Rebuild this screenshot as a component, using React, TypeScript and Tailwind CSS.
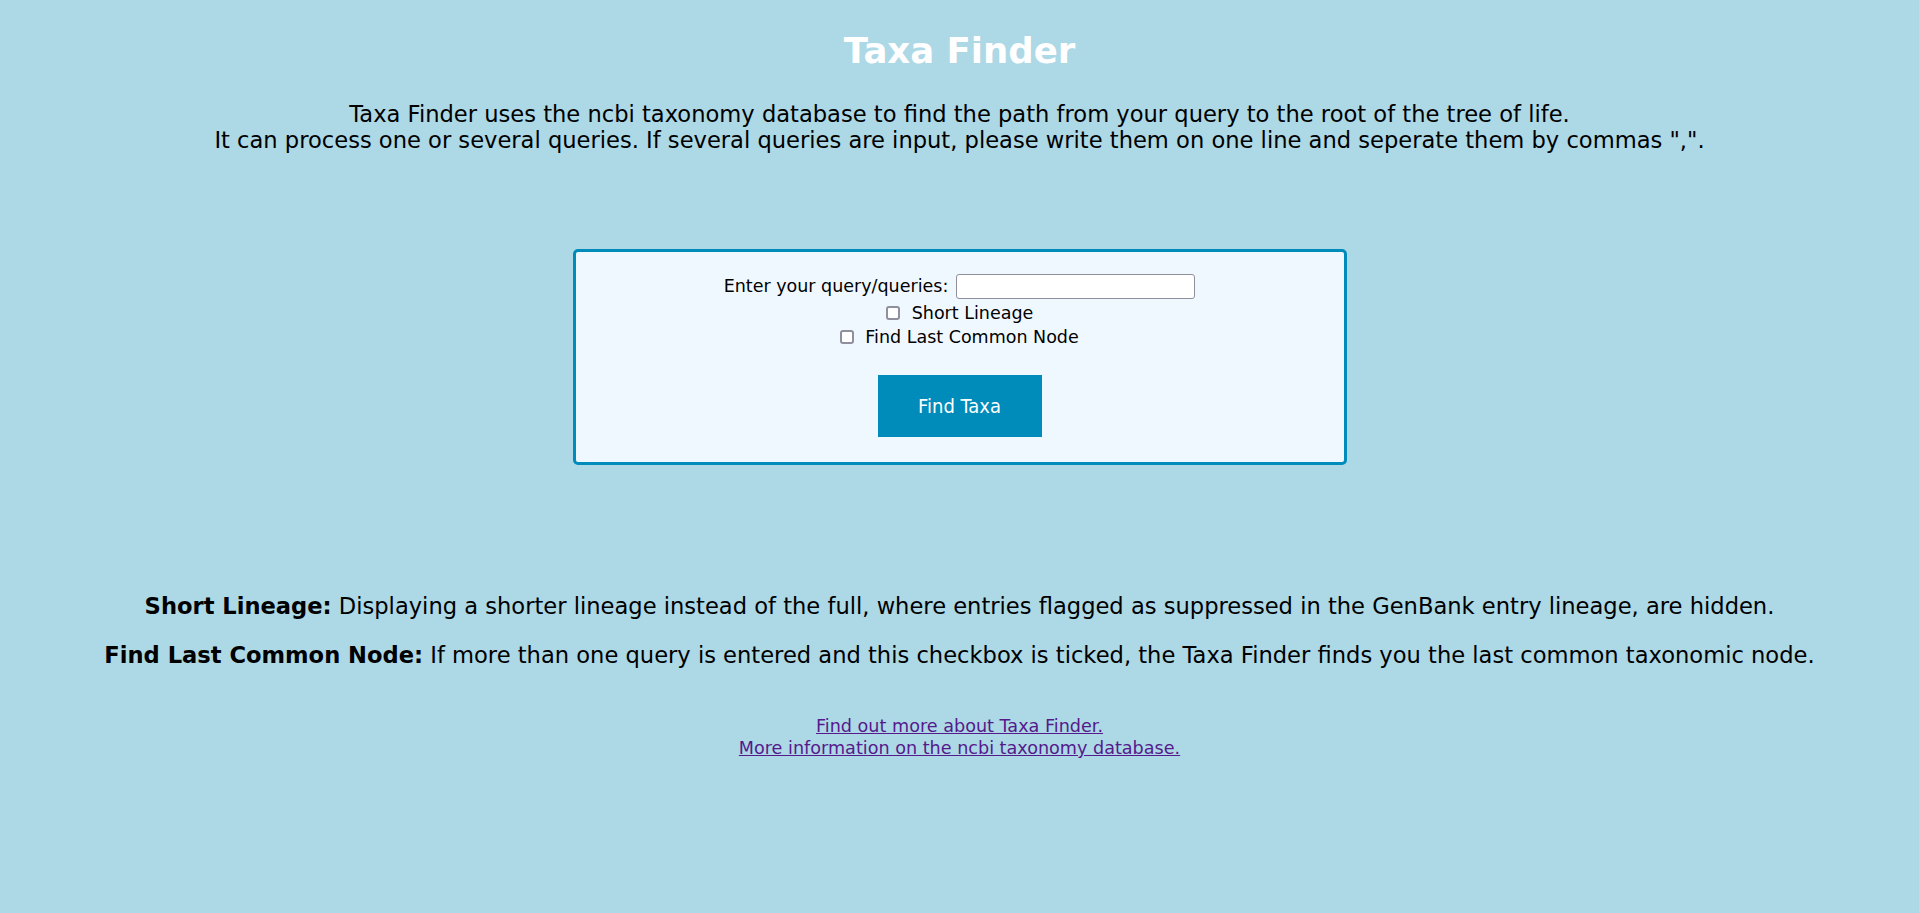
import React from 'react';

function Check({ label, gap }: { label: string; gap: string }) {
    return (
        <label className={`flex items-center justify-center h-[24px] ${gap}`}>
            <input
                type="checkbox"
                className="appearance-none w-[14px] h-[14px] rounded-[3px] border-2 border-[#8f8f9d] bg-white"
            />
            {label}
        </label>
    );
}

export default function App() {
    return (
        <div className="min-h-[913px] bg-[#add8e6] text-center text-black font-['DejaVu_Sans',Verdana,sans-serif]">
            {/* Heading */}
            <h1 className="pt-[31px] text-[35.5px] leading-[40px] font-bold text-white">Taxa Finder</h1>

            {/* Intro */}
            <p className="mt-[30px] text-[22.6px] leading-[26px]">
                Taxa Finder uses the ncbi taxonomy database to find the path from your query to the root of the tree of life.
                <br />
                It can process one or several queries. If several queries are input, please write them on one line and seperate them by commas ",".
            </p>

            {/* Query form */}
            <div className="mx-auto mt-[96px] w-[774px] h-[216px] rounded-[5px] border-[3px] border-[#008cba] bg-[#f0f8ff] pt-[22px] text-[17.5px]">
                <div className="flex items-center justify-center gap-[8px] h-[25px]">
                    <label htmlFor="query">Enter your query/queries:</label>
                    <input
                        id="query"
                        type="text"
                        className="w-[239px] h-[25px] rounded-[3px] border border-[#8f8f9d] bg-white"
                    />
                </div>
                <div className="mt-[2px]">
                    <Check label="Short Lineage" gap="gap-[12px]" />
                    <Check label="Find Last Common Node" gap="gap-[11px]" />
                </div>
                <button className="mt-[26px] w-[164px] h-[62px] bg-[#008cba] text-white text-[20px] font-['DejaVu_Sans_Condensed','DejaVu_Sans',sans-serif]">
                    Find Taxa
                </button>
            </div>

            {/* Explanations */}
            <div className="mt-[128px] text-[22.6px] leading-[27px]">
                <p>
                    <b>Short Lineage:</b> Displaying a shorter lineage instead of the full, where entries flagged as suppressed in the GenBank entry lineage, are hidden.
                </p>
                <p className="mt-[22px]">
                    <b>Find Last Common Node:</b> If more than one query is entered and this checkbox is ticked, the Taxa Finder finds you the last common taxonomic node.
                </p>
            </div>

            {/* Links */}
            <div className="mt-[46px] text-[17.6px] leading-[22px]">
                <a href="#" className="text-[#551a8b] underline">Find out more about Taxa Finder.</a>
                <br />
                <a href="#" className="text-[#551a8b] underline">More information on the ncbi taxonomy database.</a>
            </div>
        </div>
    );
}
